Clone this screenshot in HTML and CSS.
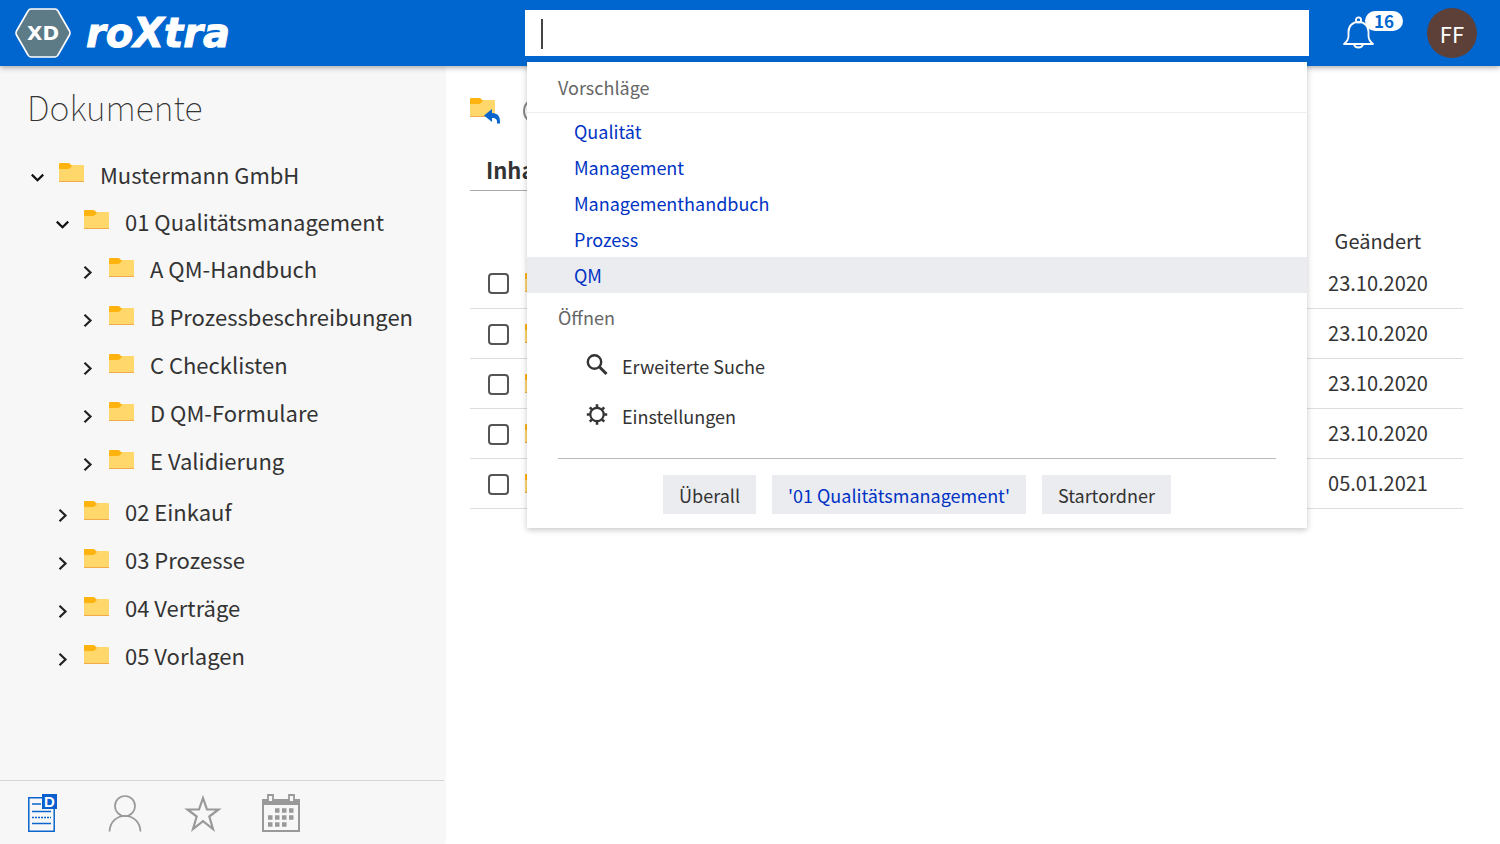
FILE: index.html
```html
<!DOCTYPE html>
<html lang="de">
    <head>
        <title>roXtra</title>
        <meta charset="UTF-8">
        <meta name="viewport" content="width=device-width, initial-scale=1">
        <link rel="stylesheet" href="styles.css">
    </head>
    <body>
        <!-- icons used more than once -->
        <svg class="sprite" aria-hidden="true">
            <symbol id="folder" viewBox="0 0 25 19">
                <path fill="#ffd76b" d="M0 2h24q1 0 1 1v15H0z"/>
                <path fill="#ffb30f" d="M0 1q0-1 1-1h8q2 0 3 2l1 1-2 2q-1 1-2 1H0z"/>
                <path fill="#f3a94c" d="M0 18h25v1H0z"/>
            </symbol>
            <symbol id="down" viewBox="0 0 13 13">
                <path fill="none" stroke="#111" stroke-width="2.2" d="M.8 3.6l5.7 5.6 5.7-5.6"/>
            </symbol>
            <symbol id="right" viewBox="0 0 13 13">
                <path fill="none" stroke="#222" stroke-width="2.2" d="M3.5.8L9.5 6.5l-6 5.7"/>
            </symbol>
        </svg>

        <header class="header">
            <div class="logo">
                <svg class="badge" viewBox="0 0 56 50" aria-hidden="true">
                    <path fill="#5d7a87" stroke="#fff" stroke-width="1.6" stroke-linejoin="round" d="M16 1h24q2 0 3 2l11.500 20q1 2 0 4L43 47q-1 2-3 2H16q-2 0-3-2L1.500 27q-1-2 0-4L13 3q1-2 3-2z"/>
                    <text x="28" y="32" text-anchor="middle" class="badge-text">XD</text>
                </svg>
                <span class="brand">roXtra</span>
            </div>
            <div class="search">
                <input type="text" class="search-input" aria-label="Suche">
                <span class="caret"></span>
                <div class="popup">
                    <h2 class="popup-title line">Vorschläge</h2>
                    <ul class="suggest">
                        <li><a href="#">Qualität</a></li>
                        <li><a href="#">Management</a></li>
                        <li><a href="#">Managementhandbuch</a></li>
                        <li><a href="#">Prozess</a></li>
                        <li class="active"><a href="#">QM</a></li>
                    </ul>
                    <h2 class="popup-title">Öffnen</h2>
                    <ul class="actions">
                        <li>
                            <a href="#">
                                <svg width="22" height="22" viewBox="0 0 22 22" fill="none" stroke="#333"><circle cx="8.500" cy="8" r="6.700" stroke-width="2.400"/><path stroke-width="3" d="M13 12.500l7.500 7.500"/></svg>
                                Erweiterte Suche
                            </a>
                        </li>
                        <li>
                            <a href="#">
                                <svg width="22" height="22" viewBox="0 0 22 22" fill="none" stroke="#333"><circle cx="11" cy="10.500" r="6.700" stroke-width="2.200"/><path stroke-width="2.600" d="M11 .3v3M11 17.700v3M.8 10.500h3M18.200 10.500h3M3.800 3.300l2 2M16.200 15.700l2 2M3.800 17.700l2-2M16.200 5.300l2-2"/></svg>
                                Einstellungen
                            </a>
                        </li>
                    </ul>
                    <div class="scope">
                        <button type="button">Überall</button>
                        <button type="button" class="selected">'01 Qualitätsmanagement'</button>
                        <button type="button">Startordner</button>
                    </div>
                </div>
            </div>
            <div class="user">
                <button type="button" class="bell" aria-label="16">
                    <svg width="32" height="34" viewBox="0 0 32 34" fill="none" stroke="#fff" stroke-width="1.800"><circle cx="15.500" cy="4" r="2.600"/><path stroke-linejoin="round" d="M5.500 20v-4c0-6 4-10 10-10s10 4 10 10v4c0 4 2 6 4.500 8H1c2.500-2 4.500-4 4.500-8z"/><path d="M11 28.500c1 4 8 4 9 0"/></svg>
                    <span class="count">16</span>
                </button>
                <button type="button" class="avatar">FF</button>
            </div>
        </header>

        <div class="page">
            <aside class="sidebar">
                <h1>Dokumente</h1>
                <ul class="tree">
                    <li>
                        <div class="row open"><button type="button" aria-label="-"><svg><use href="#down"/></svg></button><a href="#"><svg class="folder"><use href="#folder"/></svg>Mustermann GmbH</a></div>
                        <ul>
                            <li>
                                <div class="row open"><button type="button" aria-label="-"><svg><use href="#down"/></svg></button><a href="#"><svg class="folder"><use href="#folder"/></svg>01 Qualitätsmanagement</a></div>
                                <ul>
                                    <li class="row"><button type="button" aria-label="+"><svg><use href="#right"/></svg></button><a href="#"><svg class="folder"><use href="#folder"/></svg>A QM-Handbuch</a></li>
                                    <li class="row"><button type="button" aria-label="+"><svg><use href="#right"/></svg></button><a href="#"><svg class="folder"><use href="#folder"/></svg>B Prozessbeschreibungen</a></li>
                                    <li class="row"><button type="button" aria-label="+"><svg><use href="#right"/></svg></button><a href="#"><svg class="folder"><use href="#folder"/></svg>C Checklisten</a></li>
                                    <li class="row"><button type="button" aria-label="+"><svg><use href="#right"/></svg></button><a href="#"><svg class="folder"><use href="#folder"/></svg>D QM-Formulare</a></li>
                                    <li class="row"><button type="button" aria-label="+"><svg><use href="#right"/></svg></button><a href="#"><svg class="folder"><use href="#folder"/></svg>E Validierung</a></li>
                                </ul>
                            </li>
                            <li class="row"><button type="button" aria-label="+"><svg><use href="#right"/></svg></button><a href="#"><svg class="folder"><use href="#folder"/></svg>02 Einkauf</a></li>
                            <li class="row"><button type="button" aria-label="+"><svg><use href="#right"/></svg></button><a href="#"><svg class="folder"><use href="#folder"/></svg>03 Prozesse</a></li>
                            <li class="row"><button type="button" aria-label="+"><svg><use href="#right"/></svg></button><a href="#"><svg class="folder"><use href="#folder"/></svg>04 Verträge</a></li>
                            <li class="row"><button type="button" aria-label="+"><svg><use href="#right"/></svg></button><a href="#"><svg class="folder"><use href="#folder"/></svg>05 Vorlagen</a></li>
                        </ul>
                    </li>
                </ul>
                <nav class="tabs">
                    <a href="#" aria-label="Dokumente">
                        <svg width="38" height="38" viewBox="0 0 38 38" fill="none" stroke="#0a66cc"><path stroke-width="1.500" d="M14 3.700H.8v33.500h25.400V15"/><path stroke-width="1.400" d="M4 10h9M4 17.500h19M4 29.500h19"/><path stroke-width="1.400" stroke-dasharray="2 1" d="M4 23.500h19"/><path fill="#0a5fce" stroke="none" d="M14 0h15v15H14z"/><text x="21.500" y="13" text-anchor="middle" class="doc-text">D</text></svg>
                    </a>
                    <a href="#" aria-label="Person">
                        <svg width="38" height="38" viewBox="-2 0 38 38" fill="none" stroke="#999" stroke-width="1.700"><circle cx="17" cy="12" r="10"/><path d="M1.500 37.500C2 28 8.500 22 17 22s15 6 15.500 15.500"/></svg>
                    </a>
                    <a href="#" aria-label="Favoriten">
                        <svg width="38" height="38" viewBox="-1 0 38 38" fill="none" stroke="#999" stroke-width="2.200"><path d="M18 4l4 11.500h11.500L24.300 22.500 28 35l-10-7.800L8 35l3.700-12.500L2.500 15.500H14z"/></svg>
                    </a>
                    <a href="#" aria-label="Kalender">
                        <svg width="38" height="38" viewBox="0 0 38 38"><path fill="none" stroke="#999" stroke-width="2" d="M1 6h36v31H1z"/><path fill="#999" d="M0 5h38v6H0z"/><path fill="#f7f7f7" stroke="#999" stroke-width="1.800" d="M6 1h5v7H6zM27 1h5v7h-5z"/><path stroke="#999" stroke-width="4.500" stroke-dasharray="4.500 2.500" d="M13 16.500h19M6 23.500h26M6 30.500h19"/></svg>
                    </a>
                </nav>
            </aside>

            <main class="content">
                <div class="toolbar">
                    <button type="button" aria-label="Zurück">
                        <svg width="31" height="26" viewBox="0 0 31 26"><use href="#folder" width="25" height="19"/><path fill="#0a66cc" d="M14 17.500l8-6.500v4c6 0 8.500 4 8 10.500h-3c.5-4-1-5.500-5-5.500v4z"/></svg>
                    </button>
                    <button type="button" class="round" aria-label="Info"></button>
                </div>
                <h2 class="section">Inhalt</h2>
                <table class="files">
                    <thead>
                        <tr><th class="check"></th><th></th><th class="date">Geändert</th></tr>
                    </thead>
                    <tbody>
                        <tr><td class="check"><input type="checkbox" aria-label="1"></td><td><svg class="folder"><use href="#folder"/></svg></td><td class="date">23.10.2020</td></tr>
                        <tr><td class="check"><input type="checkbox" aria-label="2"></td><td><svg class="folder"><use href="#folder"/></svg></td><td class="date">23.10.2020</td></tr>
                        <tr><td class="check"><input type="checkbox" aria-label="3"></td><td><svg class="folder"><use href="#folder"/></svg></td><td class="date">23.10.2020</td></tr>
                        <tr><td class="check"><input type="checkbox" aria-label="4"></td><td><svg class="folder"><use href="#folder"/></svg></td><td class="date">23.10.2020</td></tr>
                        <tr><td class="check"><input type="checkbox" aria-label="5"></td><td><svg class="folder"><use href="#folder"/></svg></td><td class="date">05.01.2021</td></tr>
                    </tbody>
                </table>
            </main>
        </div>
    </body>
</html>
```
FILE: styles.css
```css
* {
    box-sizing: border-box;
}
body {
    margin: 0;
    min-height: 100vh;
    display: flex;
    flex-direction: column;
    font-family: "Noto Sans CJK SC", "Noto Sans", sans-serif;
    font-size: 18px;
    line-height: 24px;
    color: #333;
    background: #fff;
}
ul {
    margin: 0;
    padding: 0;
    list-style: none;
}
h1, h2 {
    margin: 0;
    font-weight: normal;
}
a {
    color: inherit;
    text-decoration: none;
}
button {
    font: inherit;
    color: inherit;
    border: 0;
    padding: 0;
    background: none;
    cursor: pointer;
}
svg {
    display: block;
    flex: none;
}
.sprite {
    position: absolute;
    width: 0;
    height: 0;
}
.folder {
    width: 25px;
    height: 19px;
}

/* header */
.header {
    position: relative;
    z-index: 2;
    height: 66px;
    display: grid;
    grid-template-columns: 35% 1fr 191px;
    align-items: center;
    background: #0066cf;
    box-shadow: 0 1px 6px rgba(0, 0, 0, 0.4);
}
.logo {
    display: flex;
    align-items: center;
    gap: 15px;
    padding-left: 15px;
    color: #fff;
}
.badge {
    width: 56px;
    height: 50px;
}
.badge-text {
    font: bold 20px "DejaVu Sans", sans-serif;
    fill: #fff;
}
.brand {
    font: italic bold 40px/50px "DejaVu Sans", sans-serif;
    -webkit-text-stroke: 1px #fff;
}
.search {
    position: relative;
}
.search-input {
    display: block;
    width: 100%;
    height: 46px;
    padding: 0 16px;
    border: 0;
    outline: 0;
    font: inherit;
    background: #fff;
}
.caret {
    position: absolute;
    left: 16px;
    top: 9px;
    width: 2px;
    height: 30px;
    background: #444;
}
.popup {
    position: absolute;
    top: 52px;
    left: 2px;
    right: 2px;
    padding-bottom: 14px;
    background: #fff;
    box-shadow: 0 2px 6px rgba(0, 0, 0, 0.22);
}
.popup-title {
    padding: 12px 31px 14px;
    font-size: 18px;
    line-height: 24px;
    color: #666;
}
.popup-title.line {
    padding: 13px 31px;
    border-bottom: 1px solid #eee;
}
.suggest li {
    padding: 6px 47px;
    color: #0033c4;
}
.suggest .active {
    background: #ebecf0;
}
.actions li {
    padding: 11px 59px 15px;
}
.actions a {
    display: flex;
    align-items: center;
    gap: 14px;
}
.actions svg {
    margin-bottom: 2px;
}
.scope {
    display: flex;
    justify-content: center;
    gap: 16px;
    margin: 15px 31px 0;
    padding-top: 16px;
    border-top: 1px solid #bbb;
}
.scope button {
    height: 39px;
    padding: 0 16px;
    background: #ebecf0;
}
.scope .selected {
    color: #0033c4;
}
.user {
    display: flex;
    align-items: center;
    justify-content: space-between;
    padding: 0 23px 0 34px;
}
.bell {
    position: relative;
}
.count {
    position: absolute;
    left: 22px;
    top: -5px;
    width: 38px;
    border-radius: 10px;
    font-size: 17px;
    line-height: 20px;
    font-weight: bold;
    color: #0066cf;
    background: #fff;
}
.avatar {
    width: 50px;
    height: 50px;
    border-radius: 50%;
    font-size: 22px;
    color: #fff;
    background: #5d4037;
}

/* sidebar */
.page {
    flex: 1;
    display: flex;
}
.sidebar {
    width: 29.6%;
    display: flex;
    flex-direction: column;
    background: #f7f7f7;
    box-shadow: 1px 0 3px rgba(0, 0, 0, 0.06);
}
.sidebar h1 {
    padding: 19px 27px 21px;
    font-size: 34px;
    line-height: 44px;
    font-weight: 100;
}
.tree {
    flex: 1;
    padding-left: 31px;
    font-size: 22px;
}
.tree ul {
    padding-left: 25px;
}
.tree ul ul {
    margin-bottom: 3px;
}
.row {
    display: flex;
    align-items: center;
    gap: 15px;
    height: 48px;
}
.row.open {
    height: 47px;
}
.row button {
    padding-top: 8px;
}
.row button svg {
    width: 13px;
    height: 13px;
}
.row a {
    display: flex;
    align-items: center;
    gap: 16px;
}
.row .folder {
    margin-bottom: 2px;
}
.tabs {
    display: flex;
    align-items: center;
    gap: 40px;
    height: 64px;
    padding-left: 28px;
    border-top: 1px solid #d5d5d5;
}
.doc-text {
    font: bold 15px "Liberation Sans", sans-serif;
    fill: #fff;
    stroke: none;
}

/* file list */
.content {
    flex: 1;
    padding: 32px 37px 0 26px;
}
.toolbar {
    display: flex;
    align-items: center;
    gap: 22px;
}
.round {
    width: 26px;
    height: 26px;
    border: 2px solid #888;
    border-radius: 50%;
}
.section {
    width: 50%;
    margin-top: 27px;
    padding: 6px 16px 9px;
    font-size: 22px;
    font-weight: bold;
    border-bottom: 1px solid #aaa;
}
.files {
    width: 100%;
    margin-top: 27px;
    border-collapse: collapse;
}
.files th {
    height: 40px;
    padding: 6px 0 0;
    font-weight: normal;
}
.files td {
    height: 50px;
    padding: 0;
    border-bottom: 1px solid #ddd;
}
.files .check {
    width: 55px;
    padding-left: 18px;
}
.files .date {
    width: 170px;
    font-size: 20px;
    text-align: center;
}
.check input {
    display: block;
    appearance: none;
    width: 21px;
    height: 21px;
    margin: 2px 0 0;
    border: 2px solid #555;
    border-radius: 4px;
}
```
